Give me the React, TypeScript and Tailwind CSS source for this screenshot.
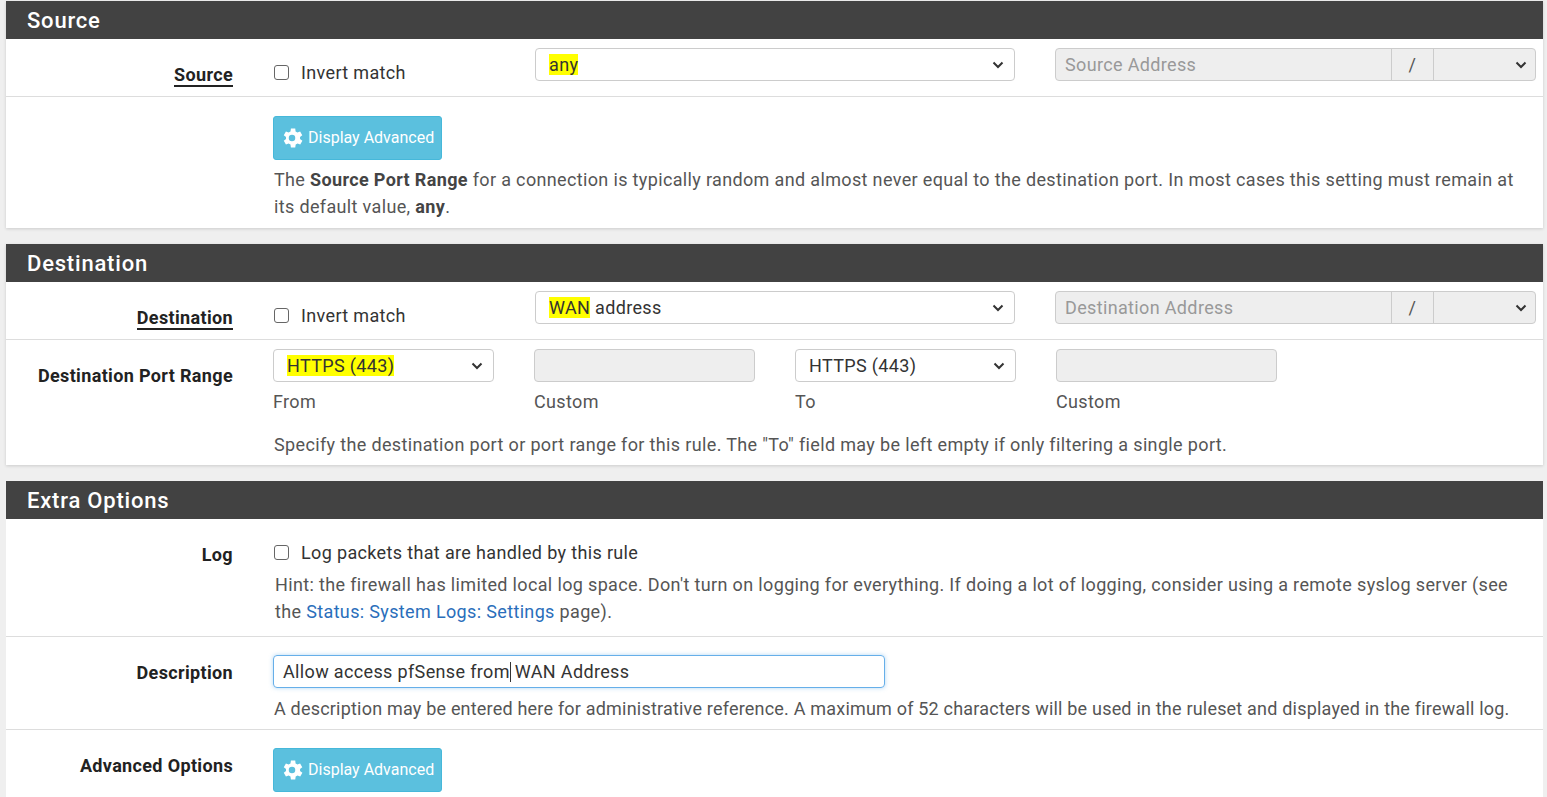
import React from 'react';

const font = { fontFamily: 'Roboto, "Liberation Sans", sans-serif' };

const Chevron = () => (
  <svg width="12" height="8" viewBox="0 0 12 8" className="shrink-0">
    <path d="M1.5 1.5 L6 6 L10.5 1.5" fill="none" stroke="#333" strokeWidth="2" />
  </svg>
);

const Gear = () => (
  <svg width="26" height="26" viewBox="0 0 24 24" fill="white">
    <path d="M19.4 13a7.7 7.7 0 0 0 0-2l2.1-1.6-2-3.5-2.5 1a7.5 7.5 0 0 0-1.7-1L15 3.2h-4l-.4 2.7a7.5 7.5 0 0 0-1.7 1l-2.5-1-2 3.5L6.5 11a7.7 7.7 0 0 0 0 2l-2.1 1.6 2 3.5 2.5-1a7.5 7.5 0 0 0 1.7 1l.4 2.7h4l.4-2.7a7.5 7.5 0 0 0 1.7-1l2.5 1 2-3.5zM12 15a3 3 0 1 1 0-6 3 3 0 0 1 0 6z" />
  </svg>
);

const Hl = ({ children }: { children: React.ReactNode }) => <span className="bg-[#ffff00]">{children}</span>;

const Select = ({ children, w }: { children?: React.ReactNode; w: string }) => (
  <div className={`${w} h-[33px] border border-[#ccc] rounded-[4px] bg-white flex items-center justify-between pl-[13px] pr-[10px] text-[#333]`}>
    <span>{children}</span>
    <Chevron />
  </div>
);

const AddrGroup = ({ placeholder }: { placeholder: string }) => (
  <div className="w-[481px] h-[33px] border border-[#ccc] rounded-[4px] bg-[#eee] flex">
    <div className="flex-1 pl-[9px] flex items-center text-[#999]">{placeholder}</div>
    <div className="w-[42px] border-l border-[#ccc] flex items-center justify-center text-[#555]">/</div>
    <div className="w-[102px] border-l border-[#ccc] flex items-center justify-end pr-[8px]"><Chevron /></div>
  </div>
);

const Check = () => <span className="w-[15px] h-[15px] border border-[#666] rounded-[3px] bg-white inline-block mr-[12px] shrink-0" />;

const Header = ({ title }: { title: string }) => (
  <div className="bg-[#424242] text-white text-[22px] font-medium h-[38px] flex items-center pl-[21px] tracking-[0.8px]">{title}</div>
);

const Row = ({ label, underline, children, cls = '' }: { label?: string; underline?: boolean; children: React.ReactNode; cls?: string }) => (
  <div className={`flex border-b border-[#ddd] last:border-b-0 ${cls}`}>
    <div className="w-[227px] shrink-0 text-right font-bold text-[#222] pt-[2px]">
      {label && <span className={underline ? 'border-b-2 border-[#222]' : ''}>{label}</span>}
    </div>
    <div className="flex-1 pl-[41px] pr-[8px] text-[#333]">{children}</div>
  </div>
);

const AdvButton = () => (
  <div className="w-[169px] h-[44px] bg-[#5bc0de] border border-[#46b8da] rounded-[3px] flex items-center pl-[5px] gap-[3px] text-white text-[16px] tracking-normal">
    <Gear />
    <span>Display Advanced</span>
  </div>
);

export default function App() {
  return (
    <div className="bg-[#efefef] w-[1547px] h-[797px] overflow-hidden pt-px pl-[6px] pr-[4px] text-[18px] tracking-[0.35px]" style={font}>
      <div className="bg-white shadow-[0_1px_3px_rgba(0,0,0,0.15)]">
        <Header title="Source" />
        <Row label="Source" underline cls="h-[58px] pt-[20px]">
          <div className="flex items-start">
            <div className="w-[261px] flex items-center"><Check />Invert match</div>
            <div className="-mt-[11px] flex items-center">
              <Select w="w-[480px]"><Hl>any</Hl></Select>
              <div className="ml-[40px]"><AddrGroup placeholder="Source Address" /></div>
            </div>
          </div>
        </Row>
        <Row cls="h-[131px] pt-[19px]">
          <div className="-ml-px"><AdvButton /></div>
          <p className="text-[#555] leading-[27px] mt-[6px]">The <b className="text-[#444]">Source Port Range</b> for a connection is typically random and almost never equal to the destination port. In most cases this setting must remain at its default value, <b className="text-[#444]">any</b>.</p>
        </Row>
      </div>

      <div className="bg-white mt-[16px] shadow-[0_1px_3px_rgba(0,0,0,0.15)]">
        <Header title="Destination" />
        <Row label="Destination" underline cls="h-[58px] pt-[20px]">
          <div className="flex items-start">
            <div className="w-[261px] flex items-center"><Check />Invert match</div>
            <div className="-mt-[11px] flex items-center">
              <Select w="w-[480px]"><Hl>WAN</Hl> address</Select>
              <div className="ml-[40px]"><AddrGroup placeholder="Destination Address" /></div>
            </div>
          </div>
        </Row>
        <Row label="Destination Port Range" cls="h-[125px] pt-[20px]">
          <div className="flex gap-[40px] -mt-[11px] -ml-px">
            {[
              ['sel', 'From', true],
              ['box', 'Custom', false],
              ['sel', 'To', false],
              ['box', 'Custom', false],
            ].map(([kind, sub, hl], i) => (
              <div key={i} className="w-[221px]">
                {kind === 'sel' ? (
                  <Select w="w-[221px]">{hl ? <Hl>HTTPS (443)</Hl> : 'HTTPS (443)'}</Select>
                ) : (
                  <div className="h-[33px] border border-[#ccc] rounded-[4px] bg-[#eee]" />
                )}
                <div className="text-[#555] mt-[6px]">{sub as string}</div>
              </div>
            ))}
          </div>
          <p className="text-[#555] mt-[16px]">Specify the destination port or port range for this rule. The "To" field may be left empty if only filtering a single port.</p>
        </Row>
      </div>

      <div className="bg-white mt-[16px]">
        <Header title="Extra Options" />
        <Row label="Log" cls="h-[118px] pt-[20px]">
          <div className="flex items-center"><Check />Log packets that are handled by this rule</div>
          <p className="text-[#555] leading-[27px] mt-[5px] pl-px">Hint: the firewall has limited local log space. Don't turn on logging for everything. If doing a lot of logging, consider using a remote syslog server (see the <span className="text-[#2a6ebb]">Status: System Logs: Settings</span> page).</p>
        </Row>
        <Row label="Description" cls="h-[93px] pt-[20px]">
          <div className="w-[612px] h-[33px] border border-[#66afe9] rounded-[4px] flex items-center pl-[9px] -mt-[2px] -ml-px text-[#333] shadow-[0_0_4px_rgba(102,175,233,0.5)] whitespace-pre">
            Allow access pfSense from<span className="inline-block w-px h-[20px] bg-[#333] mr-[4px]" />WAN Address
          </div>
          <p className="text-[#555] mt-[7px] tracking-[0.2px]">A description may be entered here for administrative reference. A maximum of 52 characters will be used in the ruleset and displayed in the firewall log.</p>
        </Row>
        <Row label="Advanced Options" cls="h-[80px] pt-[20px]">
          <div className="-mt-[2px] -ml-px"><AdvButton /></div>
        </Row>
      </div>
    </div>
  );
}
